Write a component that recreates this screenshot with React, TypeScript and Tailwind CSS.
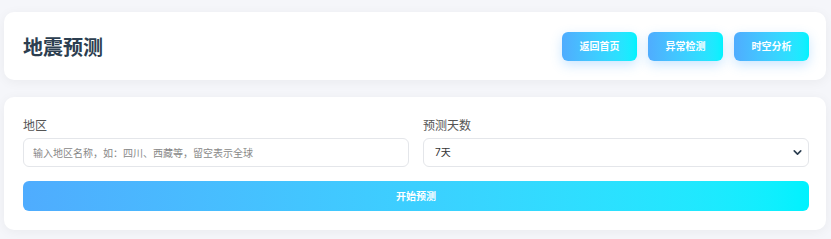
import { ChevronDown } from 'lucide-react'

const font = { fontFamily: '"Inter", "Noto Sans CJK SC", sans-serif' }

const NavButton = ({ label }: { label: string }) => (
  <button className="h-[29px] w-[75px] rounded-[6px] bg-gradient-to-r from-[#4facfe] to-[#00f2fe] text-[10px] font-bold text-white shadow-[0_4px_12px_rgba(79,172,254,0.3)]">
    {label}
  </button>
)

export default function App() {
  return (
    <div className="min-h-[239px] bg-[#f5f6fa] pt-[12px] pl-[4px] pr-[5px] pb-[9px]" style={font}>
      {/* header */}
      <div className="flex h-[68px] items-center justify-between rounded-[10px] bg-white pl-[19px] pr-[17px] shadow-[0_2px_12px_rgba(0,0,0,0.05)]">
        <h1 className="pt-[3px] text-[20px] font-bold text-[#2c3e50]">地震预测</h1>
        <div className="flex gap-[11px]">
          <NavButton label="返回首页" />
          <NavButton label="异常检测" />
          <NavButton label="时空分析" />
        </div>
      </div>

      {/* form */}
      <div className="mt-[17px] rounded-[10px] bg-white pl-[19px] pr-[17px] pt-[21px] pb-[19px] shadow-[0_2px_12px_rgba(0,0,0,0.05)]">
        <div className="grid grid-cols-2 gap-[14px]">
          <div>
            <label className="block text-[12px] leading-[16px] text-[#555]">地区</label>
            <input
              className="mt-[4px] h-[29px] w-full rounded-[6px] border border-[#e4e6ea] px-[9px] text-[10px] text-[#333] outline-none placeholder:text-[#888]"
              placeholder="输入地区名称，如：四川、西藏等，留空表示全球"
            />
          </div>
          <div>
            <label className="block text-[12px] leading-[16px] text-[#555]">预测天数</label>
            <div className="relative mt-[4px] flex h-[29px] items-center rounded-[6px] border border-[#e4e6ea] px-[11px]">
              <span className="text-[10px] text-[#333]">7天</span>
              <ChevronDown size={13} strokeWidth={3} className="absolute right-[4px] text-[#2c3e50]" />
            </div>
          </div>
        </div>
        <button className="mt-[14px] h-[30px] w-full rounded-[6px] bg-gradient-to-r from-[#4facfe] to-[#00f2fe] text-[10px] font-bold text-white">
          开始预测
        </button>
      </div>
    </div>
  )
}
